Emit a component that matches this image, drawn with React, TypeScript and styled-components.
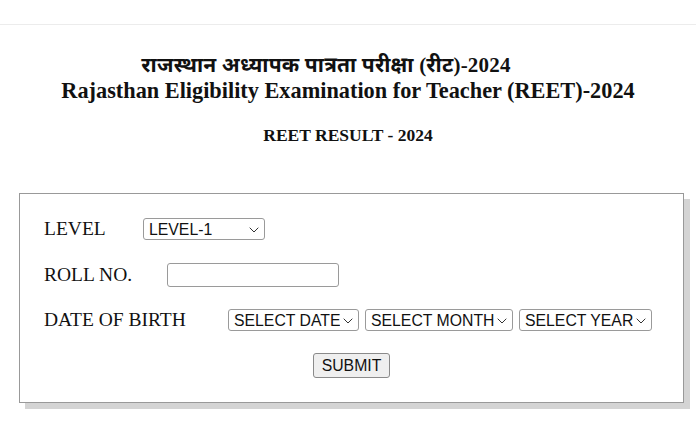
import styled, { createGlobalStyle } from 'styled-components';

const GlobalStyle = createGlobalStyle`
  html, body {
    margin: 0;
    padding: 0;
    background: #fff;
  }
  body {
    font-family: "Liberation Serif", "Noto Sans", serif;
    color: #111;
  }
`;

const Page = styled.div`
  width: 696px;
  height: 445px;
  overflow: hidden;
  background: #fff;
`;

const TopStrip = styled.div`
  height: 24px;
  border-bottom: 1px solid #ececec;
`;

const Header = styled.div`
  display: flex;
  flex-direction: column;
  align-items: center;
  padding-top: 28px;
`;

const HindiTitle = styled.div`
  font-size: 21px;
  font-weight: 700;
  line-height: 25px;
  letter-spacing: 0.2px;
  margin-right: 44px;
`;

const EnglishTitle = styled.div`
  font-size: 22.3px;
  font-weight: 700;
  line-height: 25px;
`;

const ResultTitle = styled.div`
  margin-top: 22px;
  font-size: 17.5px;
  font-weight: 700;
  line-height: 20px;
`;

const FormBox = styled.div`
  margin: 48px 0 0 19px;
  width: 665px;
  box-sizing: border-box;
  border: 1px solid #999;
  box-shadow: 6px 6px 0 #d4d4d4;
  padding: 22px 24px 23px;
  display: flex;
  flex-direction: column;
  gap: 19.5px;
`;

const Row = styled.div<{ $center?: boolean }>`
  height: 26px;
  display: flex;
  align-items: center;
  justify-content: ${(p) => (p.$center ? 'center' : 'flex-start')};
  gap: 6px;
`;

const Label = styled.div<{ $width: number }>`
  width: ${(p) => p.$width}px;
  flex: 0 0 auto;
  font-size: 19.5px;
  line-height: 22px;
`;

const SelectWrap = styled.span<{ $width: number }>`
  position: relative;
  display: inline-flex;
  width: ${(p) => p.$width}px;
  height: 22px;
  flex: 0 0 auto;
`;

const Select = styled.select`
  appearance: none;
  -webkit-appearance: none;
  width: 100%;
  height: 100%;
  box-sizing: border-box;
  font-family: "Liberation Sans", Arial, sans-serif;
  font-size: 15.8px;
  color: #111;
  background: #fff;
  border: 1px solid #9a9a9a;
  border-radius: 3px;
  padding: 0 18px 0 5px;
  outline: none;
`;

const Chevron = styled.svg`
  position: absolute;
  right: 6px;
  top: 8.5px;
  width: 10px;
  height: 6px;
  pointer-events: none;
`;

const TextInput = styled.input`
  width: 172px;
  height: 24px;
  box-sizing: border-box;
  border: 1px solid #9a9a9a;
  border-radius: 3px;
  font-family: "Liberation Sans", Arial, sans-serif;
  font-size: 15px;
  outline: none;
`;

const SubmitButton = styled.button`
  width: 77px;
  height: 25px;
  font-family: "Liberation Sans", Arial, sans-serif;
  font-size: 15.8px;
  color: #111;
  background: #efefef;
  border: 1px solid #8a8a8a;
  border-radius: 3px;
  padding: 0;
`;

function Dropdown({ width, options }: { width: number; options: string[] }) {
  return (
    <SelectWrap $width={width}>
      <Select defaultValue={options[0]}>
        {options.map((o) => (
          <option key={o} value={o}>
            {o}
          </option>
        ))}
      </Select>
      <Chevron viewBox="0 0 10 6" fill="none">
        <path d="M0.7 0.7 L5 5 L9.3 0.7" stroke="#333" strokeWidth="1" />
      </Chevron>
    </SelectWrap>
  );
}

export default function App() {
  return (
    <Page>
      <GlobalStyle />
      <TopStrip />
      <Header>
        <HindiTitle>राजस्थान अध्यापक पात्रता परीक्षा (रीट)-2024</HindiTitle>
        <EnglishTitle>Rajasthan Eligibility Examination for Teacher (REET)-2024</EnglishTitle>
        <ResultTitle>REET RESULT - 2024</ResultTitle>
      </Header>

      <FormBox>
        <Row>
          <Label $width={93}>LEVEL</Label>
          <Dropdown width={122} options={['LEVEL-1', 'LEVEL-2']} />
        </Row>
        <Row>
          <Label $width={117}>ROLL NO.</Label>
          <TextInput type="text" />
        </Row>
        <Row>
          <Label $width={178}>DATE OF BIRTH</Label>
          <Dropdown width={131} options={['SELECT DATE']} />
          <Dropdown width={148} options={['SELECT MONTH']} />
          <Dropdown width={133} options={['SELECT YEAR']} />
        </Row>
        <Row $center>
          <SubmitButton type="button">SUBMIT</SubmitButton>
        </Row>
      </FormBox>
    </Page>
  );
}
